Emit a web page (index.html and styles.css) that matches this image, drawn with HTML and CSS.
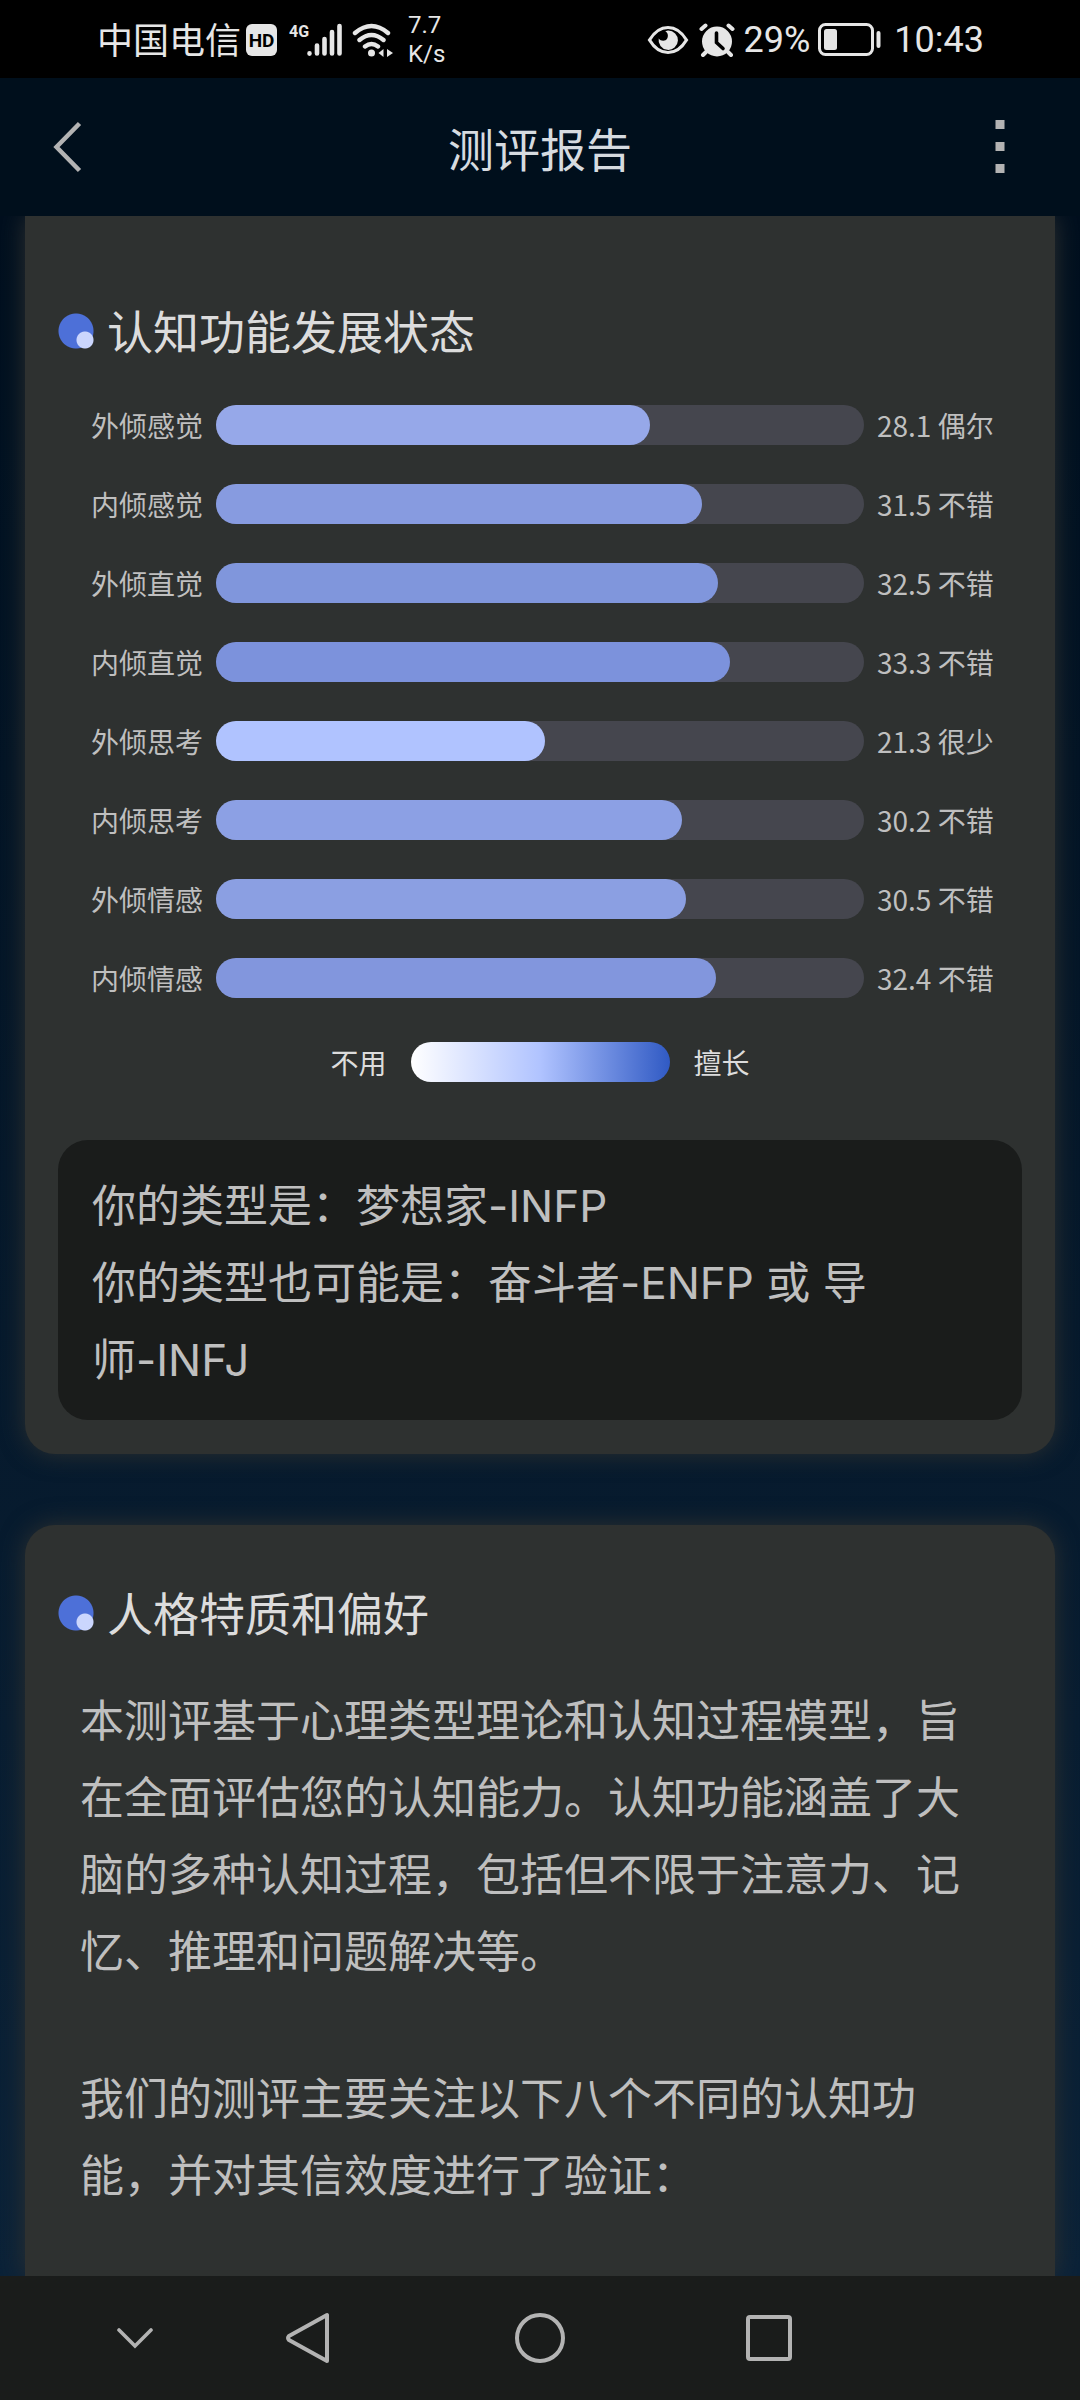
FILE: index.html
```html
<!DOCTYPE html>
<html lang="zh-CN">
<head>
<meta charset="utf-8">
<meta name="viewport" content="width=device-width, initial-scale=1">
<title>测评报告</title>
<link rel="stylesheet" href="styles.css">
</head>
<body>
<div class="status">
  <div class="status-group">
    <span class="carrier">中国电信</span>
    <span class="hd">HD</span>
    <span class="signal">
      <span class="net">4G</span>
      <svg width="36" height="34" viewBox="0 0 36 34" fill="none" stroke="currentColor" stroke-width="4.6" stroke-linecap="round" aria-hidden="true"><path d="M2.5 30.4v.2M10 22.500v8M17.500 16v14.500M25 9v21.500M32.500 3v27.500"/></svg>
    </span>
    <svg class="wifi" width="42" height="36" viewBox="0 0 42 36" fill="none" stroke="currentColor" stroke-width="4.400" stroke-linecap="round" aria-hidden="true"><path d="M3 11q16.500-14 33 0M7.500 18q12-10 24 0M13 24.500q6.500-5 13 0"/><circle cx="19.500" cy="31" r="3.500" fill="currentColor" stroke="none"/><path d="M26.500 31l5-4v8zM41 31l-6-4v8z" fill="currentColor" stroke="none"/></svg>
    <span class="speed"><span>7.7</span><span>K/s</span></span>
  </div>
  <div class="status-group">
    <svg class="eye" width="42" height="30" viewBox="0 0 42 30" aria-hidden="true"><path d="M2.500 15Q10 2.500 21 2.500T39.500 15Q32 27.500 21 27.500T2.500 15z" fill="none" stroke="currentColor" stroke-width="3.200"/><path d="M21 5.500a9.700 9.700 0 1 1-9.300 8c2 3 7 3 8.500 0 1.500-3 .5-6-2-7.300z" fill="currentColor"/></svg>
    <svg class="alarm" width="36" height="34" viewBox="0 0 36 34" aria-hidden="true"><circle cx="18" cy="18.500" r="15" fill="currentColor"/><g fill="none" stroke="#000" stroke-width="2"><path d="M1.500 10.500L11 2.500M34.500 10.500L25 2.500"/></g><g fill="none" stroke="currentColor" stroke-width="4" stroke-linecap="round"><path d="M2.500 6l4-3.500M33.500 6l-4-3.500M7 29l-3 3M29 29l3 3"/></g><path d="M17.500 10v9.500l6.500 6" fill="none" stroke="#000" stroke-width="3.600" stroke-linecap="round"/></svg>
    <span class="digits">29%</span>
    <svg class="battery" width="64" height="34" viewBox="0 0 64 34" aria-hidden="true"><rect x="1.500" y="1.500" width="53" height="30" rx="6" fill="none" stroke="currentColor" stroke-width="3"/><rect x="6" y="6" width="13" height="21" rx="2.500" fill="currentColor"/><rect x="58.500" y="8" width="4" height="17" rx="2" fill="currentColor"/></svg>
    <span class="digits">10:43</span>
  </div>
</div>

<header class="topbar">
  <button class="icon-button" type="button" aria-label="返回"><svg width="30" height="52" viewBox="0 0 30 52" fill="none" stroke="currentColor" stroke-width="4.500"><path d="M27.500 2.500L4.500 26l23 23.500"/></svg></button>
  <h1>测评报告</h1>
  <button class="icon-button" type="button" aria-label="更多"><svg width="10" height="54" viewBox="0 0 10 54" fill="currentColor"><path d="M.5 0h9v9h-9zM.5 22h9v9h-9zM.5 44h9v9h-9z"/></svg></button>
</header>

<main class="report">
  <section class="card card-continued">
    <h2>认知功能发展状态</h2>
    <ul class="bars">
      <li><span class="name">外倾感觉</span><span class="track"><span class="fill" style="width:66.9%;background:#96a8e9"></span></span><span class="score">28.1 偶尔</span></li>
      <li><span class="name">内倾感觉</span><span class="track"><span class="fill" style="width:75%;background:#879be0"></span></span><span class="score">31.5 不错</span></li>
      <li><span class="name">外倾直觉</span><span class="track"><span class="fill" style="width:77.4%;background:#8096dc"></span></span><span class="score">32.5 不错</span></li>
      <li><span class="name">内倾直觉</span><span class="track"><span class="fill" style="width:79.3%;background:#7c92dc"></span></span><span class="score">33.3 不错</span></li>
      <li><span class="name">外倾思考</span><span class="track"><span class="fill" style="width:50.7%;background:#b0c3ff"></span></span><span class="score">21.3 很少</span></li>
      <li><span class="name">内倾思考</span><span class="track"><span class="fill" style="width:71.9%;background:#8ca0e4"></span></span><span class="score">30.2 不错</span></li>
      <li><span class="name">外倾情感</span><span class="track"><span class="fill" style="width:72.6%;background:#8b9fe2"></span></span><span class="score">30.5 不错</span></li>
      <li><span class="name">内倾情感</span><span class="track"><span class="fill" style="width:77.1%;background:#8296dd"></span></span><span class="score">32.4 不错</span></li>
    </ul>
    <div class="legend"><span>不用</span><span class="scale"></span><span>擅长</span></div>
    <div class="result">
      <p>你的类型是：梦想家-INFP</p>
      <p>你的类型也可能是：奋斗者-ENFP 或 导<span class="keep">师-INFJ</span></p>
    </div>
  </section>

  <section class="card card-last">
    <h2>人格特质和偏好</h2>
    <div class="prose">
      <p>本测评基于心理类型理论和认知过程模型，旨在全面评估您的认知能力。认知功能涵盖了大脑的多种认知过程，包括但不限于注意力、记忆、推理和问题解决等。</p>
      <p>我们的测评主要关注以下八个不同的认知功能，并对其信效度进行了验证：</p>
    </div>
  </section>
</main>

<nav class="sysnav" aria-label="系统导航">
  <button type="button" aria-label="收起"><svg width="36" height="22" viewBox="0 0 36 22" fill="none" stroke="currentColor" stroke-width="3.600" stroke-linecap="round"><path d="M2 3l16 16L34 3"/></svg></button>
  <button type="button" aria-label="返回"><svg width="46" height="52" viewBox="0 0 46 52" fill="none" stroke="currentColor" stroke-width="4" stroke-linejoin="round"><path d="M42 3v46L4 28q-2-2 0-4z"/></svg></button>
  <button type="button" aria-label="主页"><svg width="50" height="50" viewBox="0 0 50 50" fill="none" stroke="currentColor" stroke-width="4"><circle cx="25" cy="25" r="23"/></svg></button>
  <button type="button" aria-label="最近任务"><svg width="46" height="46" viewBox="0 0 46 46" fill="none" stroke="currentColor" stroke-width="4"><rect x="2" y="2" width="42" height="42" rx="2"/></svg></button>
</nav>
</body>
</html>
```
FILE: styles.css
```css
* { box-sizing: border-box; }

body {
  margin: 0;
  min-height: 100vh;
  display: flex;
  flex-direction: column;
  background: #000;
  color: #bfbfbf;
  font-family: "Noto Sans CJK SC", sans-serif;
}

h1, h2, p, ul { margin: 0; padding: 0; font-weight: 400; }

button {
  display: flex;
  align-items: center;
  justify-content: center;
  padding: 0;
  border: 0;
  background: none;
  color: #b3b3b3;
}

/* Status bar */
.status {
  display: flex;
  justify-content: space-between;
  height: 78px;
  padding: 2px 96px 0 97px;
  background: #000;
  color: #e6e6e6;
}
.status-group { display: flex; align-items: center; }
.carrier { padding-bottom: 4px; font-size: 36px; line-height: 40px; }
.hd {
  width: 31px;
  height: 32px;
  margin-left: 5px;
  border-radius: 6px;
  background: #e6e6e6;
  color: #000;
  font: 700 19px/33px Roboto, sans-serif;
  text-align: center;
}
.signal { display: flex; margin-left: 12px; }
.net { width: 18px; font: 700 16px/18px Roboto, sans-serif; }
.wifi { margin-left: 9px; }
.speed {
  display: flex;
  flex-direction: column;
  margin-left: 14px;
  font: 400 24px/29px Roboto, sans-serif;
}
.alarm { margin-left: 10px; }
.digits { margin-left: 9px; font: 400 36px/40px Roboto, sans-serif; }
.battery { margin-left: 8px; }
.battery + .digits { margin-left: 12px; }

/* Title bar */
.topbar {
  display: flex;
  align-items: center;
  justify-content: space-between;
  height: 138px;
  padding: 0 32px;
  background: #000f1c;
}
.topbar h1 { color: #d6dbe0; font-size: 46px; line-height: 70px; }
.icon-button { width: 96px; height: 96px; }
.icon-button:first-child { width: 70px; margin-right: 26px; }

/* Report */
.report {
  flex: 1;
  display: flex;
  flex-direction: column;
  gap: 71px;
  padding: 0 25px;
  overflow: hidden;
  background: linear-gradient(#000f1e, #0b2238);
}
.card {
  padding: 51px 33px 34px;
  border-radius: 30px;
  background: #2e3130;
  box-shadow: 0 0 24px #2e3130;
}
.card-continued {
  padding-top: 78px;
  border-top-left-radius: 0;
  border-top-right-radius: 0;
}
.card-last {
  flex: 1;
  padding-bottom: 62px;
  border-bottom-left-radius: 0;
  border-bottom-right-radius: 0;
}
.card h2 {
  display: flex;
  gap: 13px;
  color: #dcdcdc;
  font-size: 46px;
  line-height: 70px;
}
.card h2::before {
  content: "";
  width: 36px;
  height: 36px;
  margin-top: 19px;
  background:
    radial-gradient(circle at 27px 27px, #cbd6fd 8px, transparent 9px),
    radial-gradient(circle at 18px 18px, #4d70d8 17px, transparent 18px);
}

.bars {
  display: grid;
  gap: 39px;
  margin-top: 41px;
  padding: 0 25px 0 33px;
  list-style: none;
}
.bars li {
  display: grid;
  grid-template-columns: 112px 1fr 120px;
  column-gap: 13px;
  height: 40px;
  font-size: 28px;
  line-height: 40px;
  white-space: nowrap;
}
.track { border-radius: 20px; background: #45464e; }
.fill { display: block; height: 40px; border-radius: 20px; }

.legend {
  display: flex;
  justify-content: center;
  gap: 24px;
  margin-top: 44px;
  color: #dcdcdc;
  font-size: 28px;
  line-height: 40px;
}
.scale {
  width: 259px;
  border-radius: 20px;
  background: linear-gradient(90deg, #fff, #b0c3ff 50%, #305ac4);
}

.result {
  margin-top: 58px;
  padding: 28px 34px 21px;
  border-radius: 30px;
  background: #1a1c1b;
  font-family: Inter, "Noto Sans CJK SC", sans-serif;
  font-size: 44px;
  line-height: 77px;
}
.keep { white-space: nowrap; }

.prose {
  display: grid;
  gap: 70px;
  margin-top: 34px;
  padding: 0 22px;
  font-size: 44px;
  line-height: 77px;
}

/* System navigation */
.sysnav {
  display: grid;
  grid-template-columns: 174fr 172fr 292fr 166fr;
  height: 124px;
  padding: 0 21.1% 0 4.4%;
  background: #1a1c1b;
}
```
